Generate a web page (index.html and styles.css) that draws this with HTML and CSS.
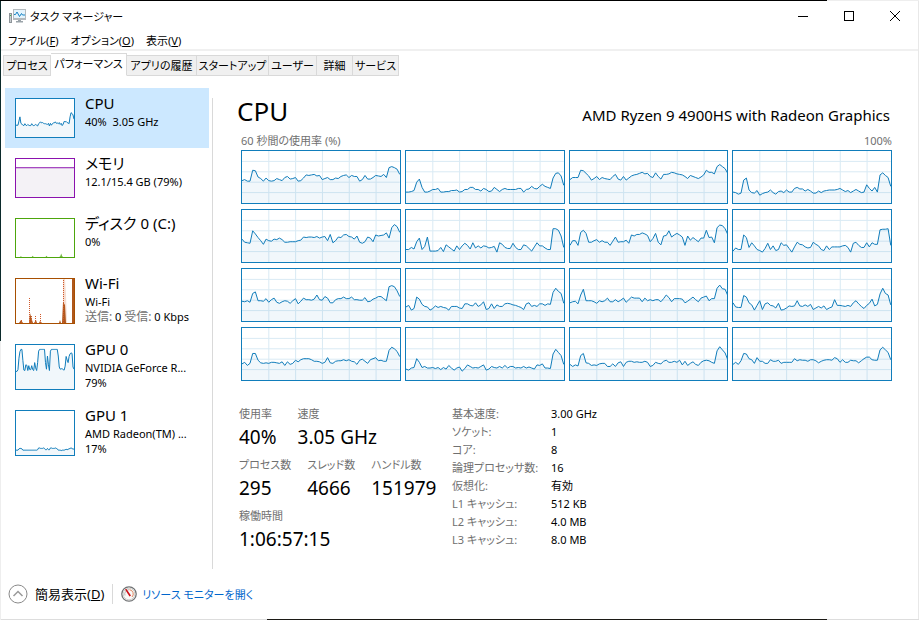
FILE: index.html
```html
<!DOCTYPE html>
<html lang="ja">
<head>
  <meta charset="UTF-8">
  <title>タスク マネージャー</title>
  <link rel="stylesheet" href="styles.css">
</head>
<body>

  <div class="window">
    <header class="titlebar">
      <svg class="app-icon" viewBox="0 0 17 16" width="17" height="16">
        <rect x="0.5" y="5.5" width="2" height="9" fill="#c9ced1" stroke="#8d9499"/>
        <rect x="1" y="7" width="1" height="1" fill="#3bb54a"/>
        <rect x="4" y="1" width="13" height="11" fill="#b4babe"/>
        <rect x="5" y="2" width="11" height="8" fill="#e4f4fd"/>
        <path d="M5 6.500h1.500L8 4l2.500 4.500L12.500 5.500l1 1.500H16" fill="none" stroke="#1683c4"/>
        <path d="M9 12h3v1h2v1.500H7V13h2z" fill="#9aa3a9"/>
      </svg>
      <span class="app-title">タスク マネージャー</span>
      <div class="window-buttons">
        <button aria-label="最小化"><svg width="10" height="10"><path d="M0 5.500h10"/></svg></button>
        <button aria-label="最大化"><svg width="10" height="10"><path d="M0.500 0.500h9v9h-9z"/></svg></button>
        <button aria-label="閉じる"><svg class="cross" width="10" height="10"><path d="M0 0l10 10M10 0L0 10"/></svg></button>
      </div>
    </header>

    <nav class="menubar">
      <button>ファイル(<u>F</u>)</button>
      <button>オプション(<u>O</u>)</button>
      <button>表示(<u>V</u>)</button>
    </nav>

    <div class="tabs" role="tablist">
      <button role="tab">プロセス</button>
      <button role="tab" class="active" aria-selected="true">パフォーマンス</button>
      <button role="tab">アプリの履歴</button>
      <button role="tab">スタートアップ</button>
      <button role="tab">ユーザー</button>
      <button role="tab">詳細</button>
      <button role="tab">サービス</button>
    </div>

    <div class="content">
      <aside class="sidebar">
        <button class="item selected">
          <svg class="thumb" data-series="cpu"></svg>
          <span class="info"><span class="name">CPU</span><span>40%&nbsp; 3.05 GHz</span></span>
        </button>
        <button class="item">
          <svg class="thumb memory" data-series="memory"></svg>
          <span class="info"><span class="name">メモリ</span><span>12.1/15.4 GB (79%)</span></span>
        </button>
        <button class="item">
          <svg class="thumb disk" data-series="disk"></svg>
          <span class="info"><span class="name">ディスク 0 (C:)</span><span>0%</span></span>
        </button>
        <button class="item">
          <svg class="thumb tall wifi" viewBox="0 0 58 44" preserveAspectRatio="none">
            <path class="soft" d="M47 44V0h2l1 16 1 28z"/>
            <path class="solid" d="M3 44l2-3 2 3zM13 44l1-10 2 7 1 3zM18 44l2-3 1 3zM23 44l1-2 2 2zM43 44l1-3 1 3zM46 44l1-21 2 3 1 18z"/>
            <path class="dotted" d="M5.500 44v-3M13.500 44V19M15.500 44v-8M19.500 44v-7M24.500 44V34M47.500 44V0"/>
            <path class="solid" d="M56 0h2v44h-2z"/>
          </svg>
          <span class="info"><span class="name">Wi-Fi</span><span>Wi-Fi</span><span><i>送信:</i> 0 <i>受信:</i> 0 Kbps</span></span>
        </button>
        <button class="item">
          <svg class="thumb tall" data-series="gpu0"></svg>
          <span class="info"><span class="name">GPU 0</span><span>NVIDIA GeForce R...</span><span>79%</span></span>
        </button>
        <button class="item">
          <svg class="thumb tall" data-series="gpu1"></svg>
          <span class="info"><span class="name">GPU 1</span><span>AMD Radeon(TM) ...</span><span>17%</span></span>
        </button>
      </aside>

      <main class="panel">
        <div class="heading">
          <h1>CPU</h1>
          <h2>AMD Ryzen 9 4900HS with Radeon Graphics</h2>
        </div>
        <div class="caption"><span>60 秒間の使用率 (%)</span><span>100%</span></div>

        <div class="cores" id="cores"></div>

        <div class="details">
          <div class="stats">
            <dl>
              <div><dt>使用率</dt><dd>40%</dd></div>
              <div><dt>速度</dt><dd>3.05 GHz</dd></div>
            </dl>
            <dl class="counts">
              <div><dt>プロセス数</dt><dd>295</dd></div>
              <div><dt>スレッド数</dt><dd>4666</dd></div>
              <div><dt>ハンドル数</dt><dd>151979</dd></div>
            </dl>
            <dl>
              <div><dt>稼働時間</dt><dd>1:06:57:15</dd></div>
            </dl>
          </div>
          <table class="specs">
            <tr><th>基本速度:</th><td>3.00 GHz</td></tr>
            <tr><th>ソケット:</th><td>1</td></tr>
            <tr><th>コア:</th><td>8</td></tr>
            <tr><th>論理プロセッサ数:</th><td>16</td></tr>
            <tr><th>仮想化:</th><td>有効</td></tr>
            <tr><th>L1 キャッシュ:</th><td>512 KB</td></tr>
            <tr><th>L2 キャッシュ:</th><td>4.0 MB</td></tr>
            <tr><th>L3 キャッシュ:</th><td>8.0 MB</td></tr>
          </table>
        </div>
      </main>
    </div>

    <footer class="footer">
      <button class="fewer">
        <svg width="20" height="20" viewBox="0 0 20 20" fill="none">
          <circle cx="10" cy="10" r="9" stroke="#8a8a8a"/>
          <path d="M5.500 12L10 7.500l4.500 4.500" stroke="#9a9a9a" stroke-width="1.500"/>
        </svg>
        <span>簡易表示(<u>D</u>)</span>
      </button>
      <a href="#" class="monitor">
        <svg width="16" height="16" viewBox="0 0 16 16" fill="none">
          <circle cx="8" cy="8" r="7.200" fill="#fafaf8" stroke="#6f7173" stroke-width="1.300"/>
          <circle cx="8" cy="8" r="5.800" stroke="#d2d2ce"/>
          <path d="M4 9.500A4.300 4.300 0 0 1 8 3.700" stroke="#b9b9b5"/>
          <path d="M8.500 3.700a4.300 4.300 0 0 1 2.500 7.300" stroke="#e0845c"/>
          <path d="M4 3.500l1.500-.5 4.500 6.500-1.500 1z" fill="#cc1018"/>
        </svg>
        <span>リソース モニターを開く</span>
      </a>
    </footer>
  </div>

  <script src="script.js"></script>
</body>
</html>
```

FILE: styles.css
```css
* {
  box-sizing: border-box;
}

body {
  margin: 0;
  padding: 1px;
  height: 100vh;
  font-family: "Noto Sans", "Noto Sans CJK JP", sans-serif;
  font-feature-settings: "palt";
  font-size: 11px;
  line-height: 15px;
  color: #000;
  /* desktop showing round the window */
  background:
    linear-gradient(to right, #000 90%, #eee 90%) top / 100% 1px no-repeat,
    linear-gradient(to bottom, #0b2a2b 55%, #eee 55%) left / 1px 100% no-repeat,
    linear-gradient(to right, #ddd 29%, #1c1a16 29%, #1c1a16 90%, #ddd 90%) bottom / 100% 1px no-repeat,
    #e8e8e8;
}

button {
  font: inherit;
  font-feature-settings: inherit;
  color: inherit;
  text-align: left;
  background: none;
  border: none;
  padding: 0;
  cursor: default;
}

h1, h2, dl, dd {
  margin: 0;
  font-weight: normal;
}

.window {
  display: flex;
  flex-direction: column;
  height: 100%;
  background: #fff;
}

/* title bar */
.titlebar {
  display: flex;
  align-items: center;
  height: 30px;
  padding-left: 8px;
}

.app-title {
  flex: 1;
  margin-left: 4px;
}

.window-buttons {
  display: flex;
}

.window-buttons button {
  display: flex;
  align-items: center;
  justify-content: center;
  width: 46px;
  height: 30px;
}

.window-buttons path {
  fill: none;
  stroke: #000;
  shape-rendering: crispEdges;
}

.window-buttons .cross path {
  shape-rendering: auto;
}

.menubar {
  display: flex;
  gap: 12px;
  height: 20px;
  padding: 0 7px;
  border-bottom: 2px solid #f0f0f0;
}

/* tabs */
.tabs {
  display: grid;
  grid-template-columns: 48px 76px 70px 72px 48px 36px 46px;
  align-items: end;
  height: 25px;
  padding-left: 2px;
}

.tabs button {
  height: 21px;
  text-align: center;
  white-space: nowrap;
  background: #f0f0f0;
  border: 1px solid #d9d9d9;
  border-left: none;
}

.tabs button:first-child {
  border-left: 1px solid #d9d9d9;
}

.tabs button.active {
  height: 23px;
  padding-bottom: 2px;
  background: #fff;
  border-bottom-color: #fff;
}

.content {
  display: flex;
  flex: 1;
  min-height: 0;
  padding-top: 12px;
}

/* resource list */
.sidebar {
  width: 211px;
  padding-left: 4px;
  padding-right: 3px;
}

.item {
  display: flex;
  gap: 10px;
  width: 100%;
  padding: 10px;
  white-space: nowrap;
}

.item.selected {
  background: #cce8ff;
}

.info {
  display: flex;
  flex-direction: column;
  height: 40px;
  margin-top: -5px;
}

.info .name {
  font-size: 15px;
  line-height: 21px;
}

.info i {
  font-style: normal;
  font-size: 12px;
  color: #707070;
}

.thumb {
  flex: none;
  width: 60px;
  height: 40px;
  background: #fff;
  border: 1px solid #117dbb;
}

.thumb.tall {
  height: 46px;
}

.line {
  fill: none;
  stroke: #117dbb;
  vector-effect: non-scaling-stroke;
}

.area {
  fill: #117dbb;
  fill-opacity: 0.06;
}

.gridline {
  stroke: #d9eaf4;
  vector-effect: non-scaling-stroke;
  shape-rendering: crispEdges;
}

.memory {
  border-color: #8b12ae;
}

.memory .line {
  stroke: #8b12ae;
  shape-rendering: crispEdges;
}

.memory .area {
  fill: #4b2a60;
}

.disk {
  border-color: #4da60c;
}

.disk .line {
  stroke: none;
}

.disk .area {
  fill: #4da60c;
  fill-opacity: 0.8;
}

.wifi {
  border-color: #a74f01;
}

.wifi .solid {
  fill: #b0581c;
}

.wifi .soft {
  fill: #f6ded2;
}

.wifi .dotted {
  stroke: #d0592a;
  stroke-dasharray: 1 1;
}

/* CPU panel */
.panel {
  flex: 1;
  min-width: 0;
  margin-top: 10px;
  padding: 0 26px 0 28px;
  border-left: 1px solid #d9d9d9;
}

.heading {
  display: flex;
  justify-content: space-between;
  align-items: baseline;
  height: 33px;
  margin-left: -4px;
}

.heading h1 {
  font-size: 26px;
  line-height: 27px;
}

.heading h2 {
  font-size: 15px;
  line-height: 20px;
  padding-right: 2px;
}

.caption {
  display: flex;
  justify-content: space-between;
  height: 19px;
  line-height: 19px;
  color: #707070;
}

.cores {
  display: grid;
  grid-template-columns: repeat(4, 1fr);
  gap: 5px 4px;
}

.cores svg {
  width: 100%;
  height: 54px;
  border: 1px solid #117dbb;
}

.details {
  display: flex;
  margin-top: 24px;
}

.stats {
  width: 213px;
  margin-left: -2px;
}

.stats dl {
  display: flex;
  gap: 21px;
  height: 51px;
  white-space: nowrap;
}

.stats .counts {
  gap: 16px;
}

.stats dt {
  line-height: 18px;
  color: #707070;
}

.stats dd {
  font-size: 19px;
  line-height: 28px;
}

.specs {
  align-self: flex-start;
  border-collapse: collapse;
}

.specs th,
.specs td {
  height: 18px;
  padding: 0;
  line-height: 18px;
  font-weight: normal;
  text-align: left;
}

.specs th {
  width: 99px;
  color: #707070;
}

/* footer */
.footer {
  display: flex;
  align-items: center;
  height: 50px;
  padding-left: 7px;
}

.fewer,
.monitor {
  display: flex;
  align-items: center;
}

.fewer {
  gap: 7px;
  font-size: 13px;
  padding-right: 8px;
  border-right: 1px solid #d9d9d9;
}

.monitor {
  gap: 5px;
  padding-left: 8px;
  color: #0066cc;
  text-decoration: none;
}
```

FILE: script.js
```js
// usage in percent, oldest sample first, one row per logical processor
const cores = [
  [43,45,42,42,63,62,50,47,42,48,43,42,43,47,45,43,49,51,46,47,49,42,43,48,54,53,54,55,52,53,45,47,49,45,45,48,47,51,53,54,49,53,51,51,42,45,53,46,46,49,53,52,51,55,49,68,70,68,65,55],
  [21,21,22,24,40,46,30,21,21,23,26,26,28,21,21,22,22,24,24,25,21,22,26,26,30,30,26,26,23,28,26,22,23,30,26,22,26,28,26,26,26,26,28,28,21,26,27,32,28,27,32,36,32,30,28,48,57,58,52,34],
  [45,49,49,49,63,62,57,52,44,47,51,45,49,47,46,45,51,55,46,44,51,44,48,52,54,55,57,59,56,57,51,49,58,51,46,55,55,56,59,58,56,55,54,51,47,53,51,49,47,50,54,63,59,59,56,70,74,70,66,57],
  [21,20,17,19,44,48,25,20,19,24,15,18,20,21,25,20,17,22,23,20,25,21,21,28,30,27,27,23,26,23,19,19,23,20,23,24,25,25,25,26,28,25,22,24,20,23,26,23,20,21,35,28,23,30,21,54,58,53,49,32],
  [44,38,37,36,60,54,47,41,34,44,41,40,44,43,46,43,38,38,39,39,39,41,42,48,47,48,48,47,49,46,48,49,41,53,37,41,48,47,52,53,49,48,44,50,38,36,39,48,46,39,52,50,51,52,56,46,66,72,68,57],
  [24,24,28,25,39,46,24,30,48,21,21,21,22,28,20,33,29,25,21,31,24,31,36,32,25,37,27,31,27,31,30,27,28,30,19,37,34,28,26,26,36,28,24,24,33,31,26,21,29,37,31,31,27,24,24,64,64,61,50,28],
  [32,41,41,32,57,61,55,38,38,41,43,38,41,38,38,32,40,48,38,39,39,42,36,52,50,53,53,56,54,51,39,45,55,38,33,50,51,60,48,52,55,52,48,32,50,42,47,43,39,46,46,61,47,48,37,66,71,70,64,53],
  [21,27,24,24,52,47,28,37,31,24,22,19,26,36,24,31,22,24,37,32,33,26,19,29,38,34,33,29,27,28,38,34,31,24,22,31,24,29,29,29,29,31,32,28,19,36,38,32,28,28,37,29,37,34,34,62,63,63,64,32],
  [38,37,39,36,53,56,39,39,38,43,36,41,44,36,34,37,39,38,34,39,43,33,38,44,41,41,40,42,50,41,40,47,44,35,35,41,43,43,46,43,43,46,41,41,40,40,45,37,38,42,44,47,47,43,39,66,68,66,58,47],
  [27,30,21,24,46,42,32,28,27,21,24,29,26,28,26,25,21,28,28,28,25,24,33,33,30,29,35,28,31,37,22,24,33,24,31,28,28,33,34,33,31,30,28,26,22,33,35,28,30,28,33,33,30,33,32,55,63,57,53,34],
  [35,37,38,33,50,61,39,39,39,37,34,39,37,39,44,37,37,41,37,40,44,36,41,46,44,44,44,37,44,39,41,39,41,41,37,43,50,45,37,43,43,43,42,35,38,42,46,41,37,44,46,48,39,43,43,63,69,62,61,49],
  [35,27,26,26,49,46,35,31,21,30,39,22,33,35,30,29,25,34,21,22,25,29,28,29,39,29,28,31,28,32,22,25,28,25,29,22,25,27,41,30,30,29,28,30,28,35,39,33,28,24,30,34,42,29,32,52,63,53,50,31],
  [31,34,28,32,51,51,38,33,32,33,32,34,34,33,32,35,28,35,30,32,38,35,39,41,41,41,39,36,36,35,32,34,43,33,32,36,37,37,39,37,39,36,35,30,38,40,36,32,39,41,43,37,38,36,36,57,63,60,55,45],
  [21,19,23,24,41,34,24,26,23,23,24,22,24,20,24,21,28,23,19,23,25,17,22,29,26,23,24,23,26,29,19,21,26,24,23,26,23,28,23,26,26,23,24,23,26,23,25,23,21,29,28,31,23,23,22,50,59,53,47,30],
  [30,26,29,27,47,51,33,32,28,29,28,31,32,32,26,26,31,26,33,35,26,34,36,36,34,35,34,34,36,34,26,28,34,32,31,36,38,34,34,36,34,38,29,36,28,32,35,30,28,34,37,38,37,34,32,56,64,58,52,39],
  [30,34,30,37,51,50,41,39,32,43,36,36,32,32,39,36,36,38,32,34,34,34,34,41,37,39,38,38,36,39,39,37,33,36,38,39,39,38,43,41,34,39,34,34,38,37,37,33,37,41,44,44,39,38,38,58,63,58,53,39]
];

const series = {
  cpu: [31,31,31,42,53,36,34,31,30,35,31,30,33,31,30,30,35,31,30,31,33,31,29,35,37,40,37,38,36,35,35,34,33,36,29,36,31,35,37,37,40,36,37,35,38,33,36,30,34,41,40,41,38,37,35,53,64,62,58,47],
  memory: [77, 77],
  disk: [0,0,0,0,0,2,0,0,0,0,0,0,0,0,0,0,0,3,0,0,0,0,0,0,0,0,0,0,0,0,0,3,0,0,0,0,0,0,0,0,0,0,0,0,0,2,9,2,0,0,0,0,0,0,0,0,0,0,0,0],
  gpu0: [40,40,44,70,85,90,90,65,43,42,55,54,42,53,44,44,53,44,42,60,48,42,60,86,90,90,90,90,90,90,60,45,75,55,42,86,90,90,90,90,90,90,90,75,50,45,46,46,44,43,52,74,66,60,74,80,82,81,50,45],
  gpu1: [11,11,11,14,15,15,14,11,11,11,11,11,11,11,11,11,11,11,11,11,11,11,12,16,16,15,15,15,16,15,12,12,15,12,12,16,16,15,15,15,16,15,14,11,11,11,10,11,11,11,12,13,12,13,14,15,16,15,13,14]
};

function drawChart(svg, values) {
  const step = 100 / (values.length - 1);
  const points = values.map((v, i) => `${(i * step).toFixed(2)},${100 - v}`).join(' ');
  svg.setAttribute('viewBox', '0 0 100 100');
  svg.setAttribute('preserveAspectRatio', 'none');
  svg.innerHTML += `<polygon class="area" points="0,100 ${points} 100,100"/>` +
    `<polyline class="line" points="${points}"/>`;
}

function drawGrid(svg) {
  let lines = '';
  for (let i = 1; i < 6; i++) {
    lines += `<line class="gridline" x1="${i * 17}" y1="0" x2="${i * 17}" y2="100"/>`;
  }
  for (let y = 20; y < 100; y += 20) {
    lines += `<line class="gridline" x1="0" y1="${y}" x2="100" y2="${y}"/>`;
  }
  svg.innerHTML = lines;
}

const container = document.getElementById('cores');
cores.forEach(values => {
  const svg = document.createElementNS('http://www.w3.org/2000/svg', 'svg');
  drawGrid(svg);
  drawChart(svg, values);
  container.appendChild(svg);
});

document.querySelectorAll('[data-series]').forEach(svg => {
  drawChart(svg, series[svg.dataset.series]);
});
```
